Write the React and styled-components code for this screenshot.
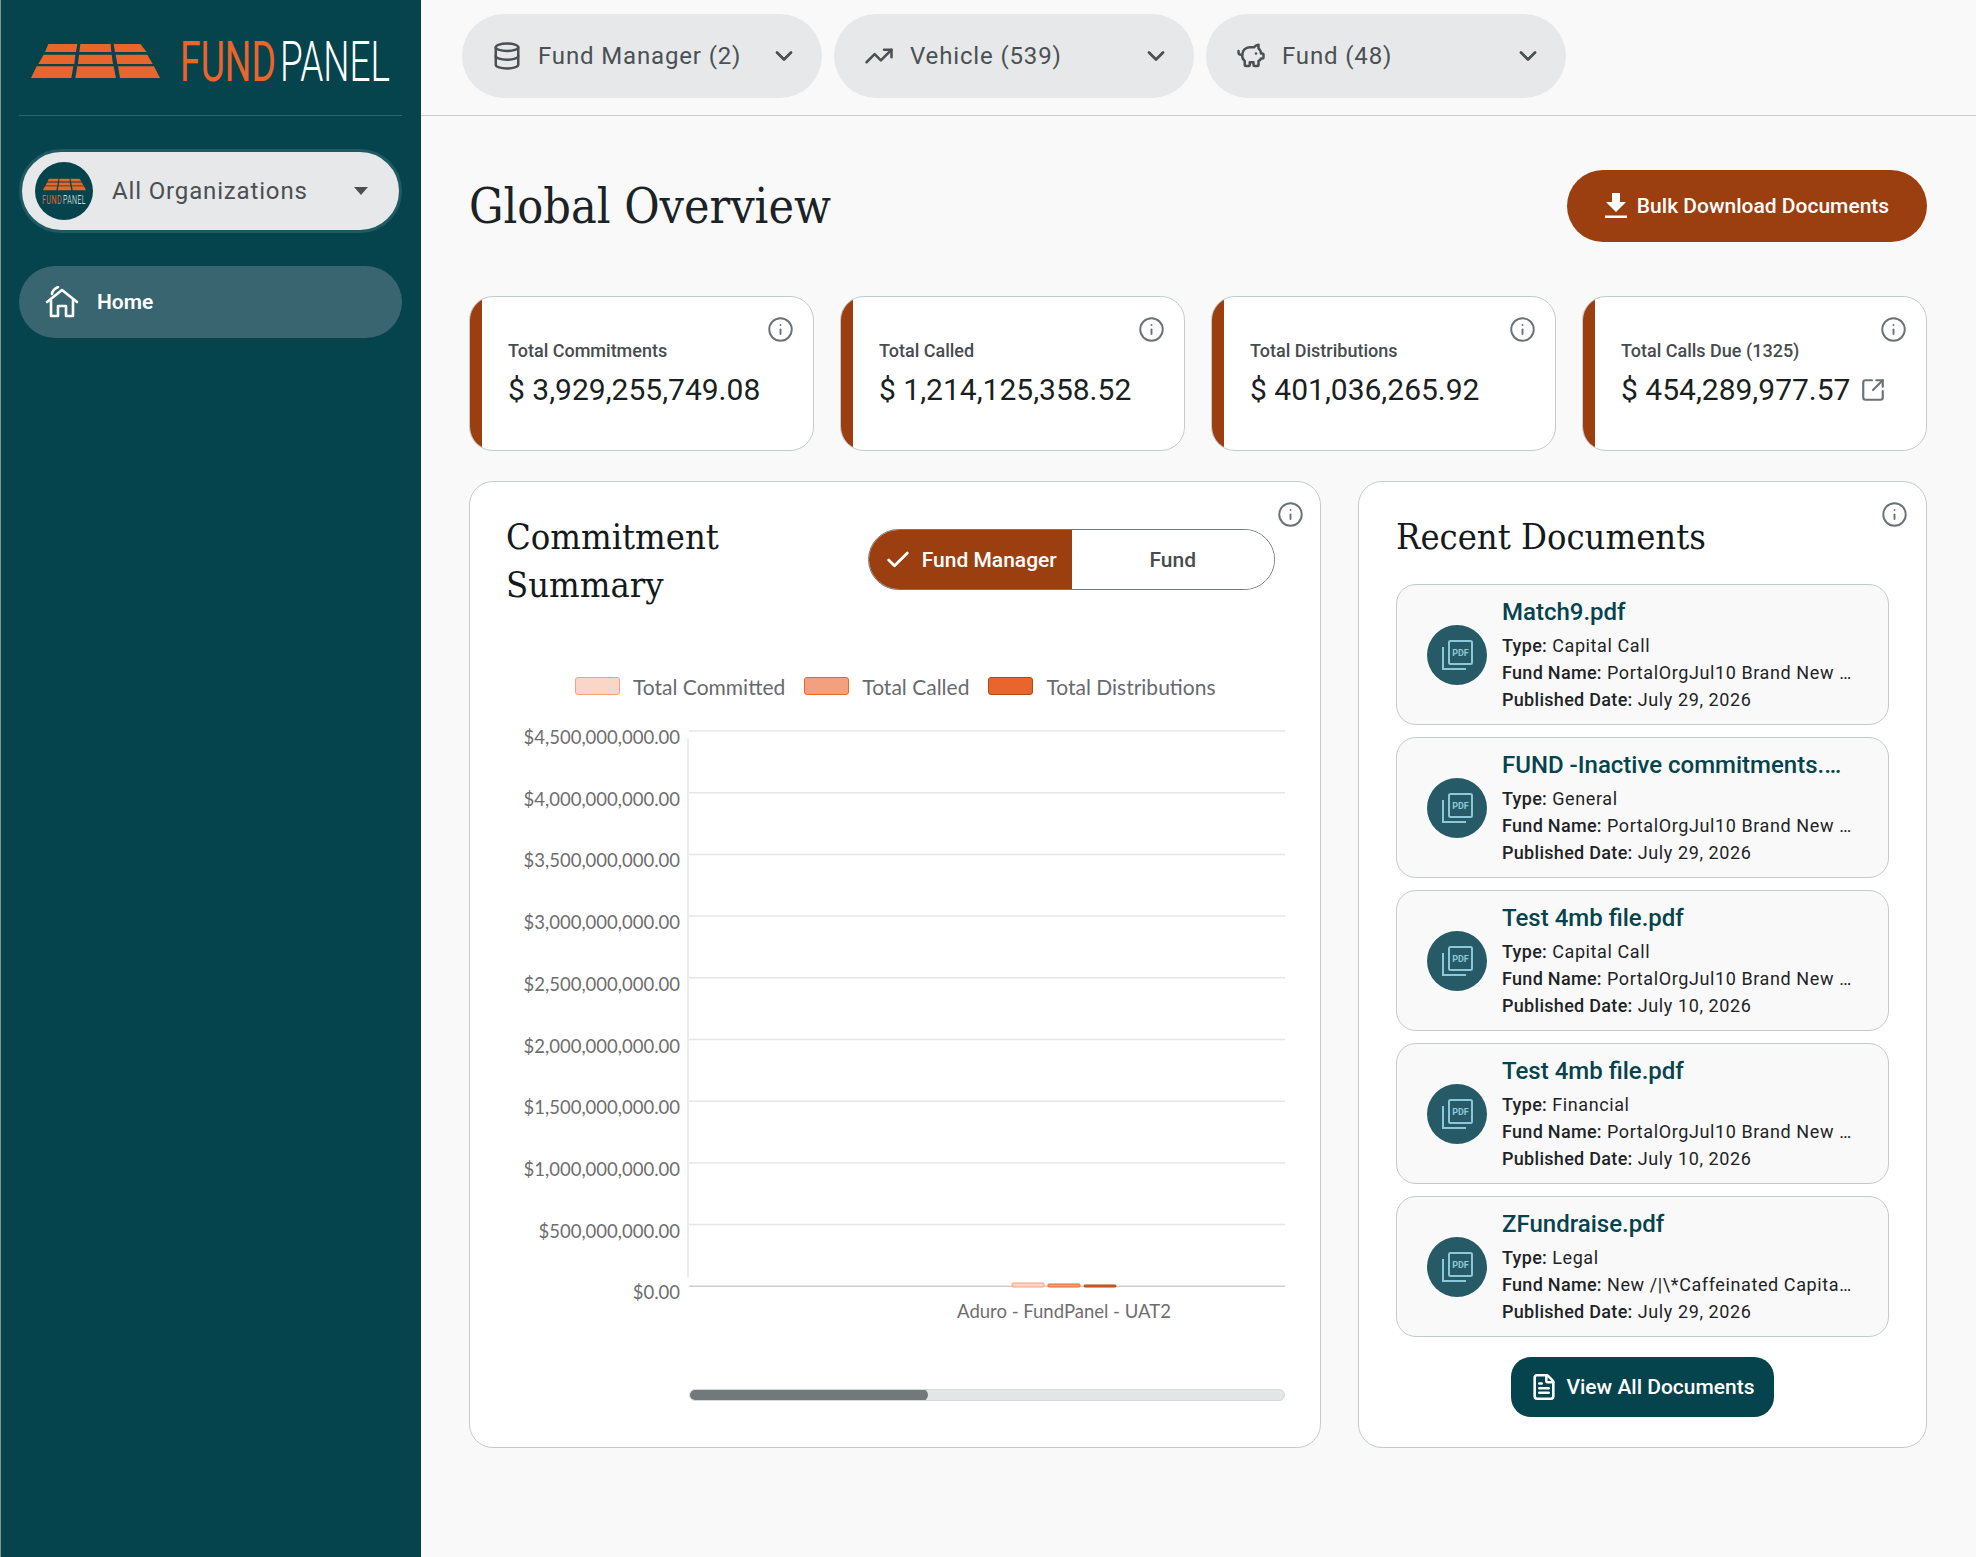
import React from 'react';
import styled, { createGlobalStyle } from 'styled-components';
import { Database, TrendingUp, PiggyBank, ChevronDown, Info, SquareArrowOutUpRight, Check, FileText } from 'lucide-react';

const GlobalStyle = createGlobalStyle`
  * { box-sizing: border-box; }
  body { margin: 0; background: #f9f9f9; font-family: Roboto, "Liberation Sans", sans-serif; }
`;

const SLAB = '"DejaVu Serif Condensed", "DejaVu Serif", serif';

const Page = styled.div`
  display: flex;
  min-height: 1557px;
`;

// sidebar
const Sidebar = styled.aside`
  width: 421px;
  flex: none;
  background: #05434d;
  border-left: 1px solid #8a8f90;
  padding: 0 19px 0 18px;
`;

const LogoRow = styled.div`
  height: 116px;
  display: flex;
  align-items: center;
  gap: 20px;
  padding: 6px 0 0 12px;
  border-bottom: 1px solid #2f626b;
`;

const OrgSelect = styled.div`
  margin-top: 33px;
  height: 84px;
  border: 3px solid #1f5a63;
  border-radius: 42px;
  background: #e7e8ea;
  display: flex;
  align-items: center;
  padding: 0 31px 0 13px;
  color: #4a4f52;
  font-size: 24px;
  letter-spacing: 0.85px;
`;

const Avatar = styled.div`
  width: 58px;
  height: 58px;
  border-radius: 50%;
  background: #05434d;
  margin-right: 19px;
  display: flex;
  flex-direction: column;
  align-items: center;
  justify-content: center;
  gap: 3px;
  flex: none;
`;

const Caret = styled.span`
  margin-left: auto;
  width: 0;
  height: 0;
  border-left: 7.5px solid transparent;
  border-right: 7.5px solid transparent;
  border-top: 8px solid #4a4f52;
`;

const NavItem = styled.div`
  margin-top: 33px;
  height: 72px;
  border-radius: 36px;
  background: #38656f;
  display: flex;
  align-items: center;
  gap: 18px;
  padding-left: 26px;
  color: #fff;
  font-size: 21px;
  font-weight: 600;
`;

// main
const Main = styled.main`
  flex: 1;
  min-width: 0;
`;

const TopBar = styled.div`
  height: 116px;
  border-bottom: 1px solid #cccccc;
  padding: 14px 0 0 41px;
  display: flex;
  gap: 12px;
`;

const FilterPill = styled.div`
  width: 360px;
  height: 84px;
  border-radius: 42px;
  background: #e7e8ea;
  display: flex;
  align-items: center;
  gap: 16px;
  padding: 0 24px 0 30px;
  color: #4a5053;
  font-size: 24px;
  letter-spacing: 0.85px;
  svg:last-child { margin-left: auto; }
`;

const Content = styled.div`
  padding: 54px 49px 0 48px;
`;

const HeaderRow = styled.div`
  display: flex;
  align-items: center;
  justify-content: space-between;
  height: 72px;
`;

const PageTitle = styled.h1`
  margin: 0;
  font-family: ${SLAB};
  font-weight: 400;
  font-size: 48px;
  color: #1b2326;
`;

const BulkButton = styled.div`
  width: 360px;
  height: 72px;
  border-radius: 36px;
  background: #9c3f10;
  color: #fff;
  font-size: 21px;
  font-weight: 500;
  display: flex;
  align-items: center;
  justify-content: center;
  gap: 10px;
`;

const StatGrid = styled.div`
  margin-top: 54px;
  display: grid;
  grid-template-columns: repeat(4, 345px);
  justify-content: space-between;
`;

const StatCard = styled.div`
  position: relative;
  height: 155px;
  background: #fff;
  border: 1px solid #c4cbcd;
  border-radius: 24px;
  overflow: hidden;
  display: flex;
`;

const Accent = styled.div`
  width: 12px;
  flex: none;
  background: #9c3f10;
`;

const StatBody = styled.div`
  padding-left: 26px;
  display: flex;
  flex-direction: column;
  justify-content: center;
  gap: 10px;
`;

const StatLabel = styled.div`
  font-size: 18px;
  line-height: 22px;
  font-weight: 500;
  color: #464c4f;
`;

const StatValue = styled.div`
  font-size: 30px;
  line-height: 36px;
  color: #1a1f21;
  display: flex;
  align-items: center;
  gap: 10px;
`;

const InfoSpot = styled.span`
  position: absolute;
  top: ${(p) => p.$top}px;
  right: ${(p) => p.$right}px;
  color: #6b7275;
  display: flex;
`;

const Panels = styled.div`
  margin-top: 30px;
  display: grid;
  grid-template-columns: 852px 569px;
  justify-content: space-between;
`;

const Panel = styled.section`
  position: relative;
  background: #fff;
  border: 1px solid #c4cbcd;
  border-radius: 24px;
  height: 967px;
`;

const ChartHead = styled.div`
  display: flex;
  justify-content: space-between;
  align-items: flex-start;
  padding: 31px 45px 0 36px;
`;

const PanelTitle = styled.h2`
  margin: 0;
  font-family: ${SLAB};
  font-weight: 400;
  font-size: 36px;
  line-height: 48px;
  color: #14191b;
  max-width: ${(p) => (p.$narrow ? '240px' : 'none')};
`;

const Toggle = styled.div`
  margin-top: 16px;
  width: 407px;
  height: 61px;
  border: 1px solid #72797b;
  border-radius: 31px;
  overflow: hidden;
  display: flex;
`;

const ToggleOption = styled.div`
  flex: 1;
  display: flex;
  align-items: center;
  justify-content: center;
  gap: 10px;
  font-size: 21px;
  font-weight: 500;
  background: ${(p) => (p.$active ? '#9c3f10' : '#fff')};
  color: ${(p) => (p.$active ? '#fff' : '#464c4f')};
`;

const Legend = styled.div`
  margin: 68px 0 0 105px;
  display: flex;
  align-items: center;
  font-family: Lato, sans-serif;
  font-size: 21px;
  color: #666b70;
  height: 18px;
`;

const Swatch = styled.span`
  width: 45px;
  height: 18px;
  border-radius: 3px;
  border: 1px solid ${(p) => p.$line};
  background: ${(p) => p.$fill};
  margin-right: 13px;
`;

const LegendLabel = styled.span`
  margin-right: 19px;
`;

const ChartSvg = styled.svg`
  display: block;
  margin-top: 24px;
  font-family: Lato, sans-serif;
`;

const ScrollTrack = styled.div`
  margin: 50px 0 0 219px;
  width: 596px;
  height: 12px;
  background: #e3e6e6;
  border: 1px solid #d4d8d8;
  border-radius: 6px;
  overflow: hidden;
`;

const ScrollThumb = styled.div`
  width: 237px;
  height: 100%;
  margin: -1px;
  box-sizing: content-box;
  padding: 1px;
  background: #72797b;
  border-radius: 6px;
`;

const RecentBody = styled.div`
  padding: 31px 37px 0 37px;
`;

const DocList = styled.div`
  margin-top: 23px;
  display: flex;
  flex-direction: column;
  gap: 12px;
`;

const DocCard = styled.div`
  height: 141px;
  background: #f9f9f9;
  border: 1px solid #c4cbcd;
  border-radius: 20px;
  display: flex;
  align-items: center;
  padding-left: 30px;
  gap: 15px;
`;

const DocIcon = styled.div`
  width: 60px;
  height: 60px;
  border-radius: 50%;
  background: #265a66;
  display: flex;
  align-items: center;
  justify-content: center;
  flex: none;
`;

const DocText = styled.div`
  width: 351px;
`;

const DocName = styled.div`
  font-size: 24px;
  line-height: 30px;
  font-weight: 500;
  color: #05434d;
  margin-bottom: 5px;
  white-space: nowrap;
  overflow: hidden;
  text-overflow: ellipsis;
`;

const DocLine = styled.div`
  font-size: 18px;
  line-height: 27px;
  letter-spacing: 0.6px;
  color: #1e2426;
  white-space: nowrap;
  overflow: hidden;
  text-overflow: ellipsis;
  b { font-weight: 500; letter-spacing: 0.3px; }
`;

const ViewAllRow = styled.div`
  margin-top: 20px;
  display: flex;
  justify-content: center;
`;

const ViewAllButton = styled.div`
  width: 263px;
  height: 60px;
  border-radius: 20px;
  background: #05434d;
  color: #fff;
  font-size: 21px;
  font-weight: 500;
  display: flex;
  align-items: center;
  justify-content: center;
  gap: 8px;
`;

// drawings
const ROOF = [
  '85,75 172,75 168,99 75,99', '181,75 272,75 274,99 178,99', '281,75 361,75 380,99 285,99',
  '71,107 166,107 163,135 55,135', '177,107 275,107 279,135 174,135', '287,107 382,107 398,135 292,135',
  '50,142 160,142 154,177 33,177', '172,142 281,142 288,177 166,177', '294,142 402,142 420,177 300,177',
];

const RoofMark = ({ width, height }) => (
  <svg width={width} height={height} viewBox="33 75 387 102">
    {ROOF.map((pts) => <polygon key={pts} points={pts} fill="#ea652b" />)}
  </svg>
);

const Wordmark = ({ width, height, size, gap, fundW, panelW }) => (
  <svg width={width} height={height} viewBox={`0 0 ${width} ${height}`}>
    <text x="0" y={height - 1} fontSize={size} fontFamily="Roboto" fill="#ea652b" textLength={fundW} lengthAdjust="spacingAndGlyphs">FUND</text>
    <text x={fundW + gap} y={height - 1} fontSize={size} fontFamily="Roboto" fontWeight="300" fill="#fff" textLength={panelW} lengthAdjust="spacingAndGlyphs">PANEL</text>
  </svg>
);

const HomeIcon = () => (
  <svg width="34" height="32" viewBox="0 0 34 32" fill="none" stroke="#fff" strokeWidth="2.6" strokeLinejoin="round" strokeLinecap="round">
    <path d="M2 16 L17 4 L32 16" />
    <path d="M6 14 V30 H13 V20 H21 V30 H28 V14" />
    <path d="M7 8 C7 5 9 3 13 1" />
  </svg>
);

const DownloadIcon = () => (
  <svg width="22" height="26" viewBox="0 0 22 26" fill="#fff">
    <path d="M7 0 H15 V9 H21 L11 19 L1 9 H7 Z" />
    <rect x="0" y="22.5" width="22" height="2.5" />
  </svg>
);

const PdfIcon = () => (
  <svg width="32" height="32" viewBox="0 0 32 32" fill="none" stroke="#8cc8d8" strokeWidth="2">
    <rect x="8" y="2" width="23" height="23" rx="1.5" />
    <path d="M2 8 V30 H25" />
    <text x="19.5" y="17" textAnchor="middle" fontSize="9" fontWeight="700" fontFamily="Roboto" fill="#8cc8d8" stroke="none">PDF</text>
  </svg>
);

const AXIS = [
  '$4,500,000,000.00', '$4,000,000,000.00', '$3,500,000,000.00', '$3,000,000,000.00', '$2,500,000,000.00',
  '$2,000,000,000.00', '$1,500,000,000.00', '$1,000,000,000.00', '$500,000,000.00', '$0.00',
];

const BARS = [
  { x: 542, top: 564, fill: '#f9d6c8', line: '#f5a080' },
  { x: 578, top: 565, fill: '#f2a07d', line: '#e9672c' },
  { x: 614, top: 566, fill: '#e9652b', line: '#a9460f' },
];

const BarChart = () => (
  <ChartSvg width="850" height="620" viewBox="0 0 850 620">
    <line x1="218" y1="19" x2="218" y2="559" stroke="#e6e6e6" strokeWidth="1.5" />
    {AXIS.map((label, i) => {
      const y = 12 + i * 61.7;
      return (
        <g key={label}>
          <line x1="219" y1={y} x2="815" y2={y} stroke={i === 9 ? '#cfcfcf' : '#e6e6e6'} strokeWidth="1.5" />
          <text x="210" y={y + 13} textAnchor="end" fontSize="18.5" fill="#6e6e6e">{label}</text>
        </g>
      );
    })}
    {BARS.map((b) => (
      <rect key={b.x} x={b.x} y={b.top} width="32" height={568 - b.top} rx="1" fill={b.fill} stroke={b.line} strokeWidth="1" />
    ))}
    <text x="594" y="599" textAnchor="middle" fontSize="18.5" fill="#6e6e6e">Aduro - FundPanel - UAT2</text>
  </ChartSvg>
);

const FILTERS = [
  { icon: Database, label: 'Fund Manager (2)' },
  { icon: TrendingUp, label: 'Vehicle (539)' },
  { icon: PiggyBank, label: 'Fund (48)' },
];

const STATS = [
  { label: 'Total Commitments', value: '$ 3,929,255,749.08' },
  { label: 'Total Called', value: '$ 1,214,125,358.52' },
  { label: 'Total Distributions', value: '$ 401,036,265.92' },
  { label: 'Total Calls Due (1325)', value: '$ 454,289,977.57', link: true },
];

const BRAND_FUND = 'PortalOrgJul10 Brand New Fund Holdings LP';

const DOCS = [
  { name: 'Match9.pdf', type: 'Capital Call', fund: BRAND_FUND, date: 'July 29, 2026' },
  { name: 'FUND -Inactive commitments.2026.pdf', type: 'General', fund: BRAND_FUND, date: 'July 29, 2026' },
  { name: 'Test 4mb file.pdf', type: 'Capital Call', fund: BRAND_FUND, date: 'July 10, 2026' },
  { name: 'Test 4mb file.pdf', type: 'Financial', fund: BRAND_FUND, date: 'July 10, 2026' },
  { name: 'ZFundraise.pdf', type: 'Legal', fund: 'New /|\\*Caffeinated Capital Partners Fund', date: 'July 29, 2026' },
];

const LEGEND = [
  { label: 'Total Committed', fill: '#f9d6c8', line: '#f5a080' },
  { label: 'Total Called', fill: '#f2a07d', line: '#e9672c' },
  { label: 'Total Distributions', fill: '#e9652b', line: '#b04a17' },
];

function App() {
  return (
    <Page>
      <GlobalStyle />
      <Sidebar>
        <LogoRow>
          <RoofMark width={129} height={34} />
          <Wordmark width={210} height={42} size={56} gap={4} fundW={96} panelW={110} />
        </LogoRow>
        <OrgSelect>
          <Avatar>
            <RoofMark width={43} height={13} />
            <Wordmark width={44} height={11} size={13} gap={1} fundW={20} panelW={23} />
          </Avatar>
          All Organizations
          <Caret />
        </OrgSelect>
        <NavItem>
          <HomeIcon />
          Home
        </NavItem>
      </Sidebar>

      <Main>
        <TopBar>
          {FILTERS.map(({ icon: Icon, label }) => (
            <FilterPill key={label}>
              <Icon size={30} strokeWidth={2} />
              {label}
              <ChevronDown size={28} strokeWidth={2.4} />
            </FilterPill>
          ))}
        </TopBar>

        <Content>
          <HeaderRow>
            <PageTitle>Global Overview</PageTitle>
            <BulkButton>
              <DownloadIcon />
              Bulk Download Documents
            </BulkButton>
          </HeaderRow>

          <StatGrid>
            {STATS.map((s) => (
              <StatCard key={s.label}>
                <Accent />
                <StatBody>
                  <StatLabel>{s.label}</StatLabel>
                  <StatValue>
                    {s.value}
                    {s.link && <SquareArrowOutUpRight size={26} color="#6b7275" strokeWidth={2} />}
                  </StatValue>
                </StatBody>
                <InfoSpot $top={19} $right={19}><Info size={27} strokeWidth={1.7} /></InfoSpot>
              </StatCard>
            ))}
          </StatGrid>

          <Panels>
            <Panel>
              <ChartHead>
                <PanelTitle $narrow>Commitment Summary</PanelTitle>
                <Toggle>
                  <ToggleOption $active><Check size={28} strokeWidth={2.4} />Fund Manager</ToggleOption>
                  <ToggleOption>Fund</ToggleOption>
                </Toggle>
              </ChartHead>
              <Legend>
                {LEGEND.map((l) => (
                  <React.Fragment key={l.label}>
                    <Swatch $fill={l.fill} $line={l.line} />
                    <LegendLabel>{l.label}</LegendLabel>
                  </React.Fragment>
                ))}
              </Legend>
              <BarChart />
              <ScrollTrack><ScrollThumb /></ScrollTrack>
              <InfoSpot $top={19} $right={16}><Info size={27} strokeWidth={1.7} /></InfoSpot>
            </Panel>

            <Panel>
              <RecentBody>
                <PanelTitle>Recent Documents</PanelTitle>
                <DocList>
                  {DOCS.map((d, i) => (
                    <DocCard key={i}>
                      <DocIcon><PdfIcon /></DocIcon>
                      <DocText>
                        <DocName>{d.name}</DocName>
                        <DocLine><b>Type:</b> {d.type}</DocLine>
                        <DocLine><b>Fund Name:</b> {d.fund}</DocLine>
                        <DocLine><b>Published Date:</b> {d.date}</DocLine>
                      </DocText>
                    </DocCard>
                  ))}
                </DocList>
                <ViewAllRow>
                  <ViewAllButton>
                    <FileText size={28} strokeWidth={2.2} />
                    View All Documents
                  </ViewAllButton>
                </ViewAllRow>
              </RecentBody>
              <InfoSpot $top={19} $right={18}><Info size={27} strokeWidth={1.7} /></InfoSpot>
            </Panel>
          </Panels>
        </Content>
      </Main>
    </Page>
  );
}

export default App;
